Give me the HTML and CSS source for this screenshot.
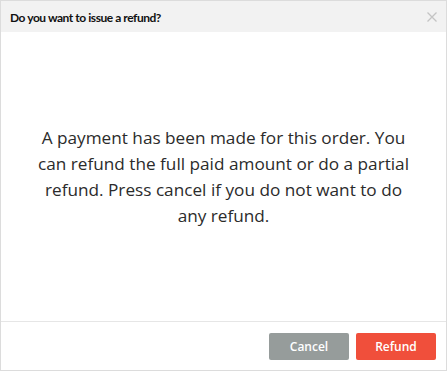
FILE: index.html
```html
<!DOCTYPE html>
<html lang="en">
<head>
    <meta charset="UTF-8">
    <title>Refund</title>
    <link rel="stylesheet" href="styles.css">
</head>
<body>
    <div class="dialog">
        <div class="dialog-header">
            <h1>Do you want to issue a refund?</h1>
            <button class="close-btn" title="Close">
                <svg width="10" height="10" viewBox="0 0 10 10"><path d="M0.5 0.5L9.5 9.5M9.5 0.5L0.5 9.5" stroke="#c4c4c4" stroke-width="1.3"/></svg>
            </button>
        </div>
        <div class="dialog-body">
            <p>A payment has been made for this order. You can refund the full paid amount or do a partial refund. Press cancel if you do not want to do any refund.</p>
        </div>
        <div class="dialog-footer">
            <button class="btn btn-cancel">Cancel</button>
            <button class="btn btn-refund">Refund</button>
        </div>
    </div>
</body>
</html>
```

FILE: styles.css
```css
body {
    margin: 0;
    font-family: "Open Sans", Arial, sans-serif;
    color: #333;
    background-color: white;
}
.dialog {
    width: 445px;
    height: 369px;
    border: 1px solid #dcdcdc;
    display: flex;
    flex-direction: column;
}
.dialog-header {
    height: 31px;
    background-color: #f2f2f2;
    display: flex;
    align-items: center;
    justify-content: space-between;
    padding: 1px 9px 0 9px;
    box-sizing: border-box;
}
.dialog-header h1 {
    margin: 0;
    font-family: Lato, Arial, sans-serif;
    font-size: 12px;
    font-weight: bold;
    color: #111;
    letter-spacing: -0.45px;
}
.close-btn {
    background: none;
    border: none;
    padding: 0;
    width: 10px;
    height: 10px;
    cursor: pointer;
    display: flex;
}
.dialog-body {
    flex: 1;
    display: flex;
    align-items: center;
    justify-content: center;
    padding: 0 28px;
    border-bottom: 1px solid #e6e6e6;
}
.dialog-body p {
    margin: 0;
    text-align: center;
    font-size: 17.2px;
    line-height: 26px;
    color: #2b2b2b;
}
.dialog-footer {
    height: 48px;
    display: flex;
    align-items: center;
    justify-content: flex-end;
    gap: 7px;
    padding: 0 10px;
}
.btn {
    width: 80px;
    height: 27px;
    border: none;
    border-radius: 2px;
    color: white;
    font-family: "Open Sans", Arial, sans-serif;
    font-size: 12px;
    font-weight: 600;
    cursor: pointer;
}
.btn-cancel {
    background-color: #969c9b;
}
.btn-refund {
    background-color: #f04f3b;
}
```
